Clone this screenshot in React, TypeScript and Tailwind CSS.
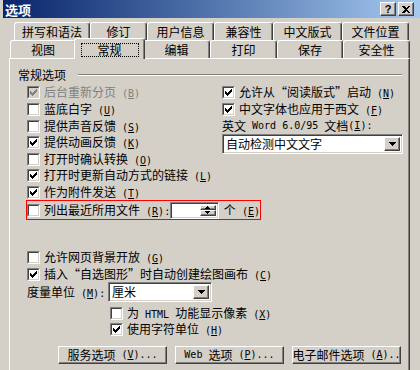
import type { ReactNode } from 'react';

const raised =
  'border border-t-white border-l-white border-r-[#404040] border-b-[#404040] shadow-[inset_-1px_-1px_0_#808080]';
const sunken =
  'border border-t-[#808080] border-l-[#808080] border-r-white border-b-white shadow-[inset_1px_1px_0_#404040,inset_-1px_-1px_0_#d4d0c8]';

function CheckMark({ color }: { color: string }) {
  return (
    <svg width="7" height="7" viewBox="0 0 7 7" shapeRendering="crispEdges" fill={color}>
      <rect x="6" y="0" width="1" height="1" />
      <rect x="5" y="1" width="2" height="1" />
      <rect x="0" y="2" width="1" height="1" />
      <rect x="4" y="2" width="3" height="1" />
      <rect x="0" y="3" width="2" height="1" />
      <rect x="3" y="3" width="3" height="1" />
      <rect x="0" y="4" width="5" height="1" />
      <rect x="1" y="5" width="3" height="1" />
      <rect x="2" y="6" width="1" height="1" />
    </svg>
  );
}

function Box({ checked, disabled }: { checked?: boolean; disabled?: boolean }) {
  return (
    <span className="flex h-[13px] w-[13px] shrink-0 border border-t-[#808080] border-l-[#808080] border-r-white border-b-white">
      <span
        className={`flex flex-1 items-center justify-center border border-t-[#404040] border-l-[#404040] border-r-[#d4d0c8] border-b-[#d4d0c8] ${
          disabled ? 'bg-[#d4d0c8]' : 'bg-white'
        }`}
      >
        {checked && <CheckMark color={disabled ? '#808080' : '#000000'} />}
      </span>
    </span>
  );
}

// latin runs are half-width, like the bitmap font in the dialog
function Lat({ children }: { children: ReactNode }) {
  return <span className="whitespace-pre font-['DejaVu_Sans_Mono',monospace] text-[10px]">{children}</span>;
}

function Mn({ k, tail = '', pre = ' ' }: { k: string; tail?: string; pre?: string }) {
  return (
    <Lat>
      {pre}(<span className="underline underline-offset-[1px]">{k}</span>){tail}
    </Lat>
  );
}

function Opt({
  label,
  checked,
  disabled,
  h = 'h-[17px]',
}: {
  label: ReactNode;
  checked?: boolean;
  disabled?: boolean;
  h?: string;
}) {
  return (
    <div className={`flex items-center gap-[4px] ${h}`}>
      <Box checked={checked} disabled={disabled} />
      <span className={`whitespace-nowrap ${disabled ? 'text-[#808080]' : 'text-black'}`}>{label}</span>
    </div>
  );
}

function Arrow() {
  return (
    <svg width="7" height="4" viewBox="0 0 7 4" shapeRendering="crispEdges" fill="#000">
      <rect x="0" y="0" width="7" height="1" />
      <rect x="1" y="1" width="5" height="1" />
      <rect x="2" y="2" width="3" height="1" />
      <rect x="3" y="3" width="1" height="1" />
    </svg>
  );
}

function Select({ value, w }: { value: string; w: string }) {
  return (
    <div className={`flex h-[20px] items-stretch bg-white p-[2px] ${sunken} ${w}`}>
      <span className="flex flex-1 items-center pl-[1px]">{value}</span>
      <span className={`flex w-[16px] items-center justify-center bg-[#d4d0c8] ${raised}`}>
        <Arrow />
      </span>
    </div>
  );
}

const row1 = [
  ['拼写和语法', 'w-[76px]'],
  ['修订', 'w-[57px]'],
  ['用户信息', 'w-[67px]'],
  ['兼容性', 'w-[59px]'],
  ['中文版式', 'w-[69px]'],
  ['文件位置', 'w-[67px]'],
];

const row2 = [
  ['视图', 'w-[66px]'],
  ['常规', 'w-[67px]'],
  ['编辑', 'w-[67px]'],
  ['打印', 'w-[67px]'],
  ['保存', 'w-[66px]'],
  ['安全性', 'w-[67px]'],
];

const tab =
  'flex h-[18px] items-center justify-center rounded-t-[3px] border-l border-t border-l-white border-t-white border-r border-r-[#404040] shadow-[inset_-1px_0_0_#808080]';

function Btn({ children }: { children: ReactNode }) {
  return (
    <div className={`flex h-[18px] w-[109px] items-center justify-center whitespace-nowrap bg-[#d4d0c8] ${raised}`}>
      {children}
    </div>
  );
}

export default function App() {
  return (
    <div className="h-[370px] w-[420px] overflow-hidden bg-[#d4d0c8] pl-[3px] font-['Noto_Sans_CJK_SC',sans-serif] text-[12px] leading-none text-black">
      {/* title bar */}
      <div className="flex h-[18px] items-center justify-between bg-linear-to-r from-[#0a246a] to-[#a6caf0] pl-[2px] pr-[6px]">
        <span className="text-[13px] font-bold text-white">选项</span>
        <div className="flex gap-[2px]">
          <span className={`flex h-[14px] w-[16px] items-center justify-center bg-[#d4d0c8] font-['Liberation_Sans',sans-serif] text-[11px] font-bold ${raised}`}>
            ?
          </span>
          <span className={`flex h-[14px] w-[16px] items-center justify-center bg-[#d4d0c8] ${raised}`}>
            <svg width="8" height="7" viewBox="0 0 8 7" shapeRendering="crispEdges" fill="#000">
              <path d="M0 0h2l2 2 2-2h2L5 3.5 8 7H6L4 5 2 7H0l3-3.5z" />
            </svg>
          </span>
        </div>
      </div>

      {/* tabs */}
      <div className="mt-[4px] ml-[11px] flex">
        {row1.map(([t, w]) => (
          <div key={t} className={`${tab} ${w}`}>
            {t}
          </div>
        ))}
      </div>
      <div className="ml-[7px] flex">
        {row2.map(([t, w]) =>
          t === '常规' ? (
            <div
              key={t}
              className="relative z-10 -mx-[2px] -mt-[2px] mb-[-1px] flex h-[21px] w-[71px] items-start justify-center rounded-t-[3px] border-l border-t border-l-white border-t-white border-r border-r-[#404040] bg-[#d4d0c8] pt-[4px] shadow-[inset_-1px_0_0_#808080]"
            >
              <span className="flex h-[14px] w-[58px] items-center justify-center border border-dotted border-black">
                {t}
              </span>
            </div>
          ) : (
            <div key={t} className={`${tab} ${w}`}>
              {t}
            </div>
          ),
        )}
      </div>

      {/* panel */}
      <div className="ml-[6px] h-[330px] w-[401px] border-l border-t border-l-white border-t-white border-r border-r-[#404040] shadow-[inset_-1px_0_0_#808080]">
        <div className="mt-[9px] flex h-[14px] items-center pl-[8px] pr-[7px]">
          <span>常规选项</span>
          <span className="ml-[12px] h-[2px] flex-1 border-t border-b border-t-[#808080] border-b-white" />
        </div>

        <div className="mt-[2px] flex pl-[17px]">
          <div className="flex w-[195px] flex-col">
            <Opt checked disabled label={<>后台重新分页<Mn k="B" /></>} />
            <Opt label={<>蓝底白字<Mn k="U" /></>} />
            <Opt h="h-[16px]" label={<>提供声音反馈<Mn k="S" /></>} />
            <Opt checked label={<>提供动画反馈<Mn k="K" /></>} />
            <Opt h="h-[16px]" label={<>打开时确认转换<Mn k="O" /></>} />
            <Opt checked label={<>打开时更新自动方式的链接<Mn k="L" /></>} />
            <Opt h="h-[16px]" checked label={<>作为附件发送<Mn k="T" /></>} />
            <div className="-ml-[1px] flex h-[20px] w-[235px] items-center border border-[#ff0000]">
              <Box />
              <span className="ml-[4px] w-[126px] whitespace-nowrap">
                列出最近所用文件<Mn k="R" tail=":" />
              </span>
              <div className={`flex h-[17px] w-[53px] bg-white p-[2px] ${sunken}`}>
                <span className="flex-1" />
                <span className="flex w-[16px] flex-col">
                  <span className={`flex flex-1 items-center justify-center bg-[#d4d0c8] ${raised}`}>
                    <svg width="5" height="3" viewBox="0 0 5 3" shapeRendering="crispEdges" fill="#000">
                      <rect x="2" y="0" width="1" height="1" />
                      <rect x="1" y="1" width="3" height="1" />
                      <rect x="0" y="2" width="5" height="1" />
                    </svg>
                  </span>
                  <span className={`flex flex-1 items-center justify-center bg-[#d4d0c8] ${raised}`}>
                    <svg width="5" height="3" viewBox="0 0 5 3" shapeRendering="crispEdges" fill="#000">
                      <rect x="0" y="0" width="5" height="1" />
                      <rect x="1" y="1" width="3" height="1" />
                      <rect x="2" y="2" width="1" height="1" />
                    </svg>
                  </span>
                </span>
              </div>
              <span className="ml-[5px] whitespace-nowrap">
                个<Mn k="E" />
              </span>
            </div>
          </div>

          <div className="flex flex-col">
            <Opt checked label={<>允许从“阅读版式”启动<Mn k="N" /></>} />
            <Opt checked label={<>中文字体也应用于西文<Mn k="F" /></>} />
            <div className="flex h-[16px] items-center whitespace-nowrap">
              英文<Lat>{' Word 6.0/95 '}</Lat>文档<Mn k="I" tail=":" pre="" />
            </div>
            <Select value="自动检测中文文字" w="w-[181px]" />
          </div>
        </div>

        <div className="mt-[29px] flex flex-col pl-[17px]">
          <Opt label={<>允许网页背景开放<Mn k="G" /></>} />
          <Opt h="h-[16px]" checked label={<>插入“自选图形”时自动创建绘图画布<Mn k="C" /></>} />
          <div className="flex h-[20px] items-center">
            <span className="w-[81px] whitespace-nowrap">
              度量单位<Mn k="M" tail=":" />
            </span>
            <Select value="厘米" w="w-[104px]" />
          </div>
          <div className="mt-[3px] flex flex-col pl-[83px]">
            <Opt h="h-[16px]" label={<>为<Lat>{' HTML '}</Lat>功能显示像素<Mn k="X" /></>} />
            <Opt checked label={<>使用字符单位<Mn k="H" /></>} />
          </div>
        </div>

        <div className="mt-[8px] flex gap-[8px] pl-[48px]">
          <Btn>
            服务选项<Mn k="V" tail="..." />
          </Btn>
          <Btn>
            <Lat>{'Web '}</Lat>选项<Mn k="P" tail="..." />
          </Btn>
          <Btn>
            电子邮件选项<Mn k="A" tail=".." />
          </Btn>
        </div>
      </div>
    </div>
  );
}
